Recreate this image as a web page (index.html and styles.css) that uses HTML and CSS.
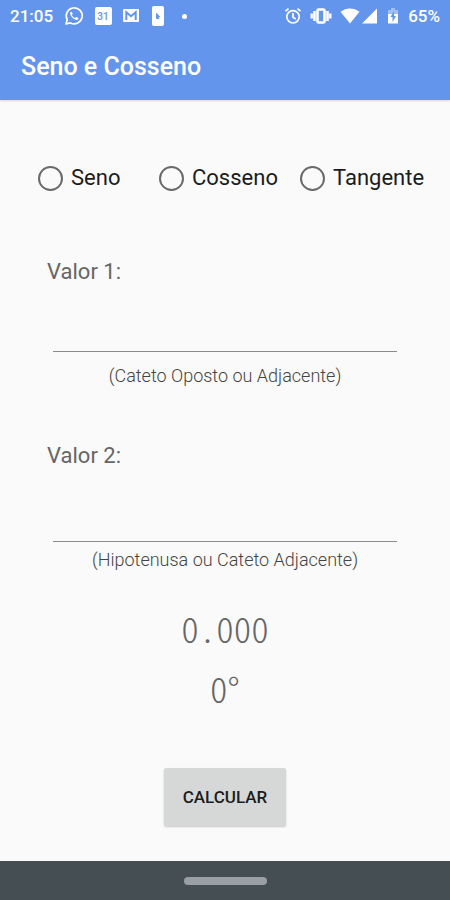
FILE: index.html
```html
<!DOCTYPE html>
<html lang="pt-BR">

<head>
  <meta charset="UTF-8" />
  <meta name="viewport" content="width=device-width, initial-scale=1.0" />
  <title>Seno e Cosseno</title>
  <link rel="stylesheet" href="styles.css">
</head>

<body>

  <header class="header">
    <div class="status-bar">
      <span>21:05</span>
      <div class="notifications">
        <!-- WhatsApp -->
        <svg width="20" height="20" viewBox="0 0 20 20" fill="none" stroke="currentColor">
          <path d="M2 18l1.2-4.3A8 8 0 1 1 6.400 16.900z" stroke-width="1.7" stroke-linejoin="round" />
          <path d="M7.200 5.600c-1.500.8-1.300 2.700.1 4.700 1.500 2.200 3.800 3.800 5.500 3.600 1.200-.2 1.700-1 1.600-1.900l-2.200-1.100-1.200 1.200c-1.500-.7-2.600-1.800-3.200-3.200l1-1.100z" fill="currentColor" stroke="none" />
        </svg>
        <!-- Calendar -->
        <svg width="18" height="20" viewBox="0 0 18 20">
          <rect x="1" y="1" width="17" height="18" rx="2" fill="currentColor" />
          <text class="calendar-day" x="9" y="14" text-anchor="middle">31</text>
        </svg>
        <!-- Gmail -->
        <svg width="18" height="20" viewBox="0 0 18 20">
          <rect x="1" y="3" width="16" height="13" rx="1" fill="currentColor" />
          <path class="cut-line" d="M4.300 14V6.200L9 10.200l4.700-4V14" />
        </svg>
        <!-- Phone -->
        <svg width="14" height="20" viewBox="0 0 14 20">
          <rect x="2" y="0" width="12" height="20" rx="2" fill="currentColor" />
          <path class="cut" d="M6 6.500l4.500 4.500-2 .2 1 2-3.500-.4z" />
        </svg>
        <span class="dot"></span>
      </div>
      <div class="system">
        <!-- Alarm -->
        <svg width="18" height="18" viewBox="0 0 18 18" fill="none" stroke="currentColor" stroke-width="1.700">
          <circle cx="9" cy="9.800" r="6.200" />
          <path d="M1.500 4.200l3-2.600M16.500 4.200l-3-2.600M9 6v4.200l2.800 1.800" />
        </svg>
        <!-- Vibrate -->
        <svg class="vibrate" width="22" height="18" viewBox="0 0 22 18" fill="none" stroke="currentColor">
          <rect x="7.500" y="2.500" width="7" height="13" rx="1" stroke-width="2.600" />
          <path d="M4.500 4v10M17.500 4v10" stroke-width="2.600" />
          <path d="M1.700 6.500v5M20.300 6.500v5" stroke-width="2.400" />
        </svg>
        <!-- Wi-Fi -->
        <svg width="20" height="18" viewBox="0 0 20 18">
          <path d="M.5 4.800C6 .3 14 .3 19.500 4.800L10 16.500z" fill="currentColor" />
        </svg>
        <!-- Signal -->
        <svg class="signal" width="17" height="18" viewBox="0 0 17 18">
          <path d="M16 1.500V16.500H1z" fill="currentColor" />
        </svg>
        <!-- Battery -->
        <svg class="battery" width="12" height="18" viewBox="0 0 12 18">
          <path d="M4 1h4v2h3v5H1V3h3z" fill="currentColor" opacity=".4" />
          <path d="M1 7h10v9.500H1z" fill="currentColor" />
          <path class="cut" d="M7 4v5h2l-3.500 6v-5h-2z" />
        </svg>
        <span>65%</span>
      </div>
    </div>
    <h1>Seno e Cosseno</h1>
  </header>

  <main>
    <form class="calculator">
      <div class="functions" role="radiogroup" aria-label="Função">
        <label><input type="radio" name="func" value="sin" /> Seno</label>
        <label><input type="radio" name="func" value="cos" /> Cosseno</label>
        <label><input type="radio" name="func" value="tan" /> Tangente</label>
      </div>

      <div class="field">
        <label for="valor1">Valor 1:</label>
        <input type="text" id="valor1" inputmode="decimal" aria-describedby="hint1" />
        <p class="hint" id="hint1">(Cateto Oposto ou Adjacente)</p>
      </div>

      <div class="field field-last">
        <label for="valor2">Valor 2:</label>
        <input type="text" id="valor2" inputmode="decimal" aria-describedby="hint2" />
        <p class="hint" id="hint2">(Hipotenusa ou Cateto Adjacente)</p>
      </div>

      <output class="result" for="valor1 valor2">0.000</output>
      <output class="result" for="valor1 valor2">0°</output>

      <button type="button" class="calculate">CALCULAR</button>
    </form>
  </main>

  <footer class="nav-bar">
    <span class="nav-handle"></span>
  </footer>

</body>

</html>
```

FILE: styles.css
```css
* {
  box-sizing: border-box;
}

body {
  font-family: Roboto, sans-serif;
  margin: 0;
  min-height: 100vh;
  display: flex;
  flex-direction: column;
  background: #fafafa;
  color: #666;
}

.header {
  background: #6495ed;
  color: white;
  height: 100px;
  box-shadow: 0 1px 2px rgba(0, 0, 0, 0.15);
}

.status-bar {
  display: flex;
  align-items: center;
  height: 32px;
  padding: 0 10px;
  font-size: 17px;
  font-weight: 500;
}

.status-bar svg {
  display: block;
}

.notifications,
.system {
  display: flex;
  align-items: center;
}

.notifications {
  gap: 10px;
  margin-left: 11px;
}

.system {
  margin-left: auto;
}

.calendar-day {
  font-size: 10px;
  fill: #6495ed;
}

.cut {
  fill: #6495ed;
}

.cut-line {
  fill: none;
  stroke: #6495ed;
  stroke-width: 2;
}

.dot {
  width: 5px;
  height: 5px;
  margin-left: 8px;
  border-radius: 50%;
  background: white;
}

.vibrate {
  margin: 0 8px;
}

.signal {
  margin-left: 1px;
}

.battery {
  margin: 0 9px;
}

h1 {
  margin: 0;
  padding: 19px 21px;
  font-size: 25px;
  line-height: 32px;
  font-weight: 500;
}

main {
  flex: 1;
}

.calculator {
  display: flex;
  flex-direction: column;
  padding: 62px 47px 32px;
}

.functions {
  display: grid;
  grid-template-columns: 121fr 141fr 125fr;
  margin: 0 -22px 62px -9px;
  color: #1c1c1c;
  font-size: 22px;
  line-height: 32px;
}

.functions label {
  display: flex;
  align-items: center;
  gap: 8px;
  white-space: nowrap;
}

.functions input {
  appearance: none;
  flex: none;
  width: 25px;
  height: 25px;
  margin: 0;
  border: 2px solid #6a6a6a;
  border-radius: 50%;
}

.functions input:checked {
  background: radial-gradient(#6495ed 50%, transparent 55%);
}

.field {
  display: flex;
  flex-direction: column;
  margin-bottom: 52px;
}

.field label {
  font-size: 22px;
  line-height: 32px;
}

.field input {
  height: 64px;
  margin: 0 6px 12px;
  padding: 16px 0 0;
  border: none;
  border-bottom: 1px solid #8c8c8c;
  background: transparent;
  color: #1c1c1c;
  font-family: inherit;
  font-size: 22px;
  outline: none;
}

.field-last {
  margin-bottom: 26px;
}

.field-last input {
  height: 70px;
  margin-bottom: 6px;
}

.hint {
  margin: 0;
  color: #444;
  font-size: 18px;
  font-weight: 300;
  line-height: 24px;
  text-align: center;
}

.result {
  font-family: "Noto Sans CJK SC", monospace;
  font-feature-settings: "hwid";
  font-weight: 300;
  font-size: 35px;
  line-height: 60px;
  text-align: center;
}

.calculate {
  align-self: center;
  margin-top: 50px;
  padding: 0 19px;
  border: none;
  border-radius: 2px;
  background: #d6d8d7;
  box-shadow: 0 1px 2px rgba(0, 0, 0, 0.2);
  color: #1c1c1c;
  font-family: inherit;
  font-size: 17px;
  font-weight: 500;
  line-height: 58px;
  cursor: pointer;
}

.nav-bar {
  display: flex;
  align-items: center;
  justify-content: center;
  height: 39px;
  background: #454e53;
}

.nav-handle {
  width: 83px;
  height: 8px;
  border-radius: 4px;
  background: #999fa2;
}
```
